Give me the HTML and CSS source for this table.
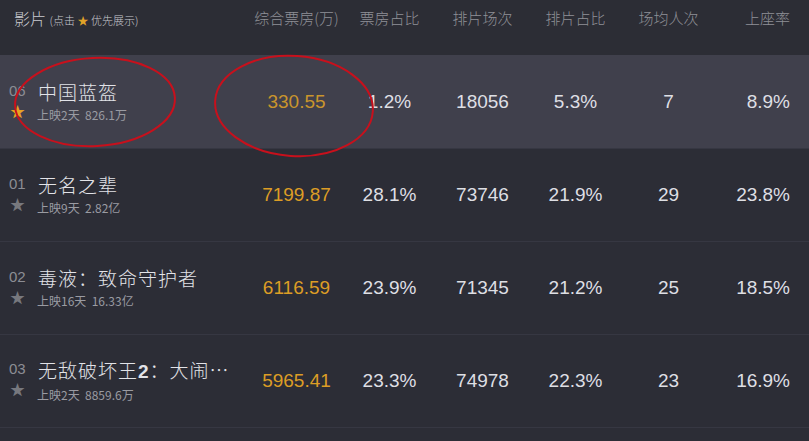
FILE: index.html
```html
<!DOCTYPE html>
<html lang="zh-CN">

<head>
    <meta charset="UTF-8">
    <meta name="viewport" content="width=device-width, initial-scale=1.0">
    <title>实时票房</title>
    <link rel="stylesheet" href="styles.css">
</head>

<body>

    <div class="board">
        <!-- Header -->
        <div class="row head">
            <div class="cell name-head">影片 <span class="hint">(点击 <span class="star-mini">★</span> 优先展示)</span></div>
            <div class="cell">综合票房(万)</div>
            <div class="cell">票房占比</div>
            <div class="cell">排片场次</div>
            <div class="cell">排片占比</div>
            <div class="cell">场均人次</div>
            <div class="cell last">上座率</div>
        </div>

        <div class="row item active">
            <div class="cell name">
                <div class="rank">06<span class="star on">★</span></div>
                <div class="info">
                    <div class="title">中国蓝盔</div>
                    <div class="sub">上映2天&nbsp;&nbsp;826.1万</div>
                </div>
            </div>
            <div class="cell num gold">330.55</div>
            <div class="cell num">1.2%</div>
            <div class="cell num">18056</div>
            <div class="cell num">5.3%</div>
            <div class="cell num">7</div>
            <div class="cell num last">8.9%</div>
        </div>

        <div class="row item">
            <div class="cell name">
                <div class="rank">01<span class="star">★</span></div>
                <div class="info">
                    <div class="title">无名之辈</div>
                    <div class="sub">上映9天&nbsp;&nbsp;2.82亿</div>
                </div>
            </div>
            <div class="cell num gold">7199.87</div>
            <div class="cell num">28.1%</div>
            <div class="cell num">73746</div>
            <div class="cell num">21.9%</div>
            <div class="cell num">29</div>
            <div class="cell num last">23.8%</div>
        </div>

        <div class="row item">
            <div class="cell name">
                <div class="rank">02<span class="star">★</span></div>
                <div class="info">
                    <div class="title">毒液：致命守护者</div>
                    <div class="sub">上映16天&nbsp;&nbsp;16.33亿</div>
                </div>
            </div>
            <div class="cell num gold">6116.59</div>
            <div class="cell num">23.9%</div>
            <div class="cell num">71345</div>
            <div class="cell num">21.2%</div>
            <div class="cell num">25</div>
            <div class="cell num last">18.5%</div>
        </div>

        <div class="row item">
            <div class="cell name">
                <div class="rank">03<span class="star">★</span></div>
                <div class="info">
                    <div class="title">无敌破坏王<b>2</b>：大闹…</div>
                    <div class="sub">上映2天&nbsp;&nbsp;8859.6万</div>
                </div>
            </div>
            <div class="cell num gold">5965.41</div>
            <div class="cell num">23.3%</div>
            <div class="cell num">74978</div>
            <div class="cell num">22.3%</div>
            <div class="cell num">23</div>
            <div class="cell num last">16.9%</div>
        </div>

        <div class="row item"></div>

        <!-- hand-drawn marks over the first row -->
        <svg class="marks" width="809" height="441" viewBox="0 0 809 441">
            <ellipse cx="95" cy="102" rx="80" ry="44" transform="rotate(-3 95 102)" />
            <ellipse cx="294" cy="106" rx="79" ry="50" transform="rotate(4 294 106)" />
        </svg>
    </div>

</body>

</html>
```

FILE: styles.css
```css
/* General */
body {
    margin: 0;
    background-color: #2c2d35;
    font-family: "Liberation Sans", "Noto Sans CJK SC", sans-serif;
    overflow: hidden;
}

.board {
    position: relative;
    width: 809px;
    height: 441px;
    overflow: hidden;
}

/* Rows */
.row {
    display: grid;
    grid-template-columns: 250px repeat(5, 93px) 94px;
    align-items: center;
}

.cell {
    text-align: center;
}

.cell.last {
    text-align: right;
    padding-right: 19px;
}

/* Header */
.head {
    height: 55px;
    align-items: start;
    padding-top: 8px;
    box-sizing: border-box;
    color: #8f9097;
    font-family: "Noto Sans CJK SC", sans-serif;
    font-weight: 300;
    font-size: 15px;
    line-height: 20px;
}

.name-head {
    text-align: left;
    padding-left: 14px;
    color: #c9cad0;
    font-size: 16px;
}

.hint {
    font-size: 11px;
    color: #c9cad0;
}

.star-mini {
    color: #e0a228;
    font-size: 11px;
}

/* Items */
.item {
    height: 93px;
    background-color: #2c2d36;
    border-top: 1px solid #363742;
    box-sizing: border-box;
}

.item.active {
    background-color: #40404c;
    border-top: none;
}

.name {
    display: flex;
    text-align: left;
    padding-left: 9px;
    align-items: flex-start;
}

.rank {
    width: 29px;
    display: flex;
    flex-direction: column;
    color: #8c8d94;
    font-size: 15px;
    line-height: 17px;
    padding-top: 1px;
}

.star {
    color: #77787e;
    font-size: 15px;
    line-height: 15px;
    margin-top: 5px;
    margin-left: 1px;
}

.star.on {
    color: #e5a323;
}

.title {
    color: #e2e3e8;
    font-family: "Noto Sans CJK SC", sans-serif;
    font-weight: 300;
    font-size: 19px;
    line-height: 24px;
    letter-spacing: 1px;
    white-space: nowrap;
    margin-top: -1px;
}

.title b {
    font-family: "Liberation Sans", sans-serif;
    font-weight: bold;
}

.sub {
    color: #9a9ba2;
    font-family: "Noto Sans CJK SC", sans-serif;
    font-size: 12px;
    line-height: 16px;
    margin-top: 3px;
    margin-left: -1px;
}

.num {
    color: #dedfe4;
    font-size: 19px;
}

.num.gold {
    color: #dc9d25;
}

.active .num.gold {
    color: #c9952c;
}

/* Overlay marks */
.marks {
    position: absolute;
    left: 0;
    top: 0;
    pointer-events: none;
}

.marks ellipse {
    fill: none;
    stroke: #c8101c;
    stroke-width: 2;
}
```
